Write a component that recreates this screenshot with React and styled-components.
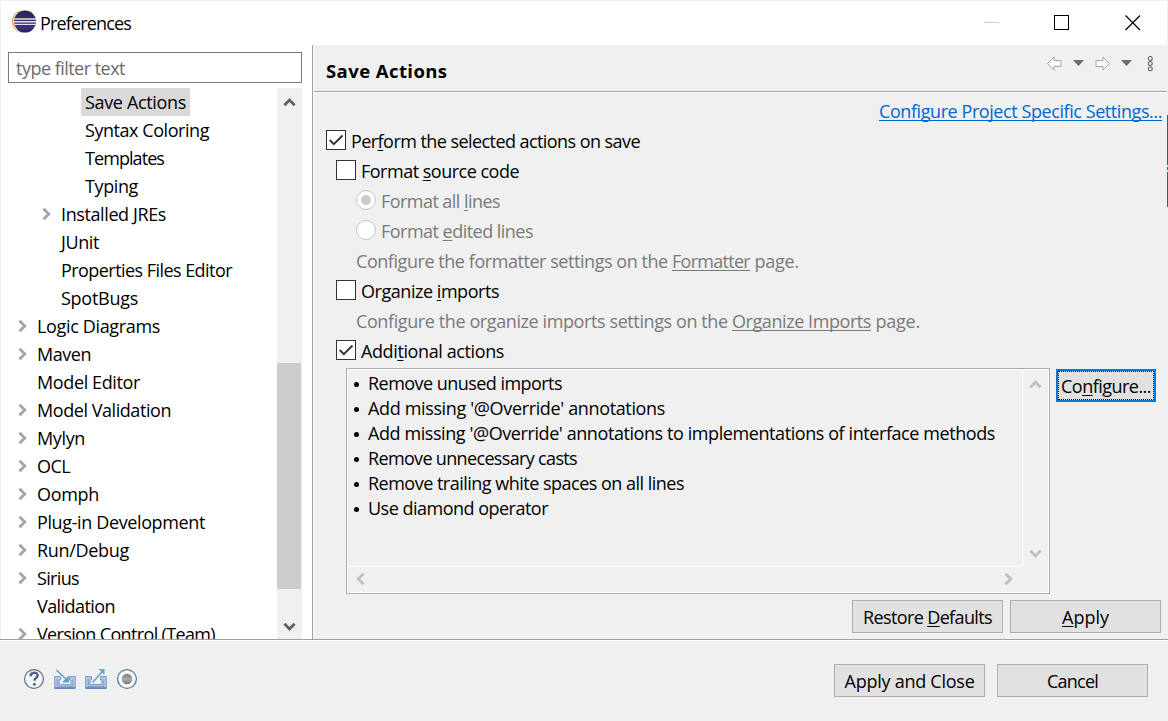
import React, { useLayoutEffect, useRef } from "react";
import styled, { createGlobalStyle } from "styled-components";

const Global = createGlobalStyle`
  * { box-sizing: border-box; }
  html, body { margin: 0; padding: 0; overflow: hidden; }
  body {
    font-family: "Open Sans", "Noto Sans", sans-serif;
    font-size: 18px;
    color: #000;
    background: #f0f0f0;
  }
`;

/* ---------- text ---------- */

const Text = styled.span`
  display: inline-block;
  flex: none;
  white-space: pre;
  color: ${(p) => p.$color || "inherit"};
  font-weight: ${(p) => (p.$bold ? 700 : 400)};
  font-size: ${(p) => (p.$bold ? "18.5px" : "18px")};
`;

const Mnemonic = styled.u`
  text-decoration: underline;
  text-decoration-thickness: 1px;
  text-underline-offset: 2px;
  text-decoration-skip-ink: none;
`;

/* A label whose tracking is computed so that it fills the given width.
   "&" marks the letter that follows it as the keyboard mnemonic. */
function Label({ w, text, color, bold, as: Inner }) {
  const ref = useRef(null);
  useLayoutEffect(() => {
    const el = ref.current;
    el.style.letterSpacing = "0px";
    const natural = el.getBoundingClientRect().width;
    el.style.letterSpacing = (w - natural) / el.textContent.length + "px";
  }, [w, text]);
  const i = text.indexOf("&");
  const body =
    i < 0 ? text : (
      <>
        {text.slice(0, i)}
        <Mnemonic>{text[i + 1]}</Mnemonic>
        {text.slice(i + 2)}
      </>
    );
  return (
    <Text ref={ref} $color={color} $bold={bold}>
      {Inner ? <Inner>{body}</Inner> : body}
    </Text>
  );
}

const Link = styled.a`
  text-decoration: underline;
  text-decoration-thickness: 1px;
  text-underline-offset: 2px;
  text-decoration-skip-ink: none;
`;

/* ---------- window ---------- */

const Window = styled.div`
  position: relative;
  width: 1168px;
  height: 721px;
  display: flex;
  flex-direction: column;
  background: #f0f0f0;
  padding: 1px 1px 0;
  overflow: hidden;
`;

const TitleBar = styled.header`
  flex: none;
  height: 44px;
  background: #fff;
  display: flex;
  align-items: flex-start;
  padding-left: 11px;
`;

const AppIcon = styled.svg`
  flex: none;
  width: 25px;
  height: 24px;
  margin-top: 9px;
`;

const TitleText = styled.div`
  line-height: 28px;
  margin: 8px 0 0 3px;
  flex: 1;
`;

const WindowButtons = styled.div`
  display: flex;
  gap: 54px;
  padding: 13px 25px 0 0;
  svg { display: block; width: 17px; height: 17px; }
`;

const Body = styled.main`
  flex: none;
  height: 594px;
  display: flex;
`;

/* ---------- left panel ---------- */

const Sidebar = styled.aside`
  flex: none;
  width: 313px;
  height: 594px;
  background: #fff;
  border-right: 1px solid #fff;
  box-shadow: inset -1px 0 0 #a0a0a0;
  padding: 7px 0 0 7px;
`;

const FilterBox = styled.div`
  width: 294px;
  height: 31px;
  border: 1px solid #7a7a7a;
  line-height: 31px;
  padding-left: 7px;
`;

const TreeArea = styled.div`
  width: 294px;
  height: 551px;
  margin-top: 5px;
  display: flex;
  overflow: hidden;
`;

const Tree = styled.ul`
  list-style: none;
  margin: 0;
  padding: 0;
  flex: 1;
  min-width: 0;
`;

const TreeItem = styled.li`
  height: 28px;
  line-height: 28px;
  display: flex;
  align-items: center;
  padding-left: ${(p) => 10 + p.$level * 24}px;
`;

const TreeArrow = styled.span`
  width: 15px;
  flex: none;
  display: flex;
`;

const TreeLabel = styled.span`
  display: flex;
  padding: 0 4px;
  background: ${(p) => (p.$selected ? "#d9d9d9" : "transparent")};
`;

const ScrollTrack = styled.div`
  flex: none;
  width: 25px;
  height: 551px;
  background: #f0f0f0;
  display: flex;
  flex-direction: column;
  align-items: center;
  padding: 9px 0 0;
`;

const ScrollThumb = styled.div`
  flex: none;
  width: 24px;
  height: 226px;
  margin: 255px 1px 32px 0;
  background: #cdcdcd;
`;

/* ---------- right panel ---------- */

const Page = styled.section`
  flex: 1;
  display: flex;
  flex-direction: column;
`;

const PageHeader = styled.div`
  flex: none;
  height: 48px;
  border-bottom: 1px solid #fff;
  box-shadow: inset 0 -1px 0 #a0a0a0;
  display: flex;
  justify-content: space-between;
  padding: 11px 13px 0 12px;
  line-height: 30px;
`;

const NavTools = styled.svg`
  width: 107px;
  height: 18px;
`;

const LinkRow = styled.div`
  display: flex;
  justify-content: flex-end;
  line-height: 30px;
  height: 33px;
  padding: 3px 5px 0 0;
`;

const OptionRow = styled.div`
  height: 30px;
  line-height: 30px;
  display: flex;
  padding-left: ${(p) => p.$indent}px;
  color: ${(p) => (p.$disabled ? "#7a7a7a" : "#000")};
`;

const CheckBox = styled.span`
  flex: none;
  width: 20px;
  height: 20px;
  margin: 4px 5px 0 0;
  border: 1px solid #333;
  background: #fff;
  svg { display: block; width: 18px; height: 18px; }
`;

const Radio = styled.span`
  flex: none;
  width: 20px;
  height: 20px;
  margin: 4px 5px 0 0;
  border: 1px solid #c6c6c6;
  border-radius: 50%;
  background: ${(p) =>
    p.$on ? "radial-gradient(circle, #ccc 4.7px, #fff 5.4px)" : "#fff"};
`;

const ActionsRow = styled.div`
  display: flex;
  align-items: flex-start;
  padding: 2px 0 0 32px;
`;

const ListBox = styled.div`
  width: 704px;
  height: 226px;
  border: 1px solid #acacac;
  box-shadow: inset 0 0 0 1px #fff;
  padding: 1px;
  display: grid;
  grid-template-columns: 675px 1fr;
  grid-template-rows: 197px 1fr;
`;

const ListContent = styled.ul`
  list-style: none;
  margin: 0;
  padding: 1px 0 0 5px;
  border-right: 1px solid #fff;
  border-bottom: 1px solid #fff;
`;

const ListItem = styled.li`
  height: 25px;
  line-height: 25px;
  display: flex;
  align-items: center;
  &::before {
    content: "";
    width: 5px;
    height: 5px;
    border-radius: 50%;
    background: #000;
    margin: 1px 9px 0 1px;
  }
`;

const MiniScroll = styled.div`
  display: flex;
  flex-direction: ${(p) => (p.$vertical ? "column" : "row")};
  align-items: center;
  justify-content: space-between;
  padding: ${(p) => (p.$vertical ? "9px 0 8px" : "0 8px 1px 7px")};
`;

const Button = styled.button`
  font: inherit;
  color: #000;
  width: ${(p) => p.$w || 151}px;
  height: 33px;
  padding: 1px 0 0;
  border: 1px solid #adadad;
  background: #e1e1e1;
  display: flex;
  align-items: center;
  justify-content: center;
  line-height: 30px;
`;

const FocusedButton = styled(Button)`
  margin: 1px 0 0 6px;
  padding: 0;
  border: 2px solid #0078d7;
  outline: 1px dotted #000;
  outline-offset: -3px;
`;

const PageButtons = styled.div`
  display: flex;
  justify-content: flex-end;
  gap: 7px;
  padding: 6px 6px 0 0;
`;

/* ---------- footer ---------- */

const Footer = styled.footer`
  flex: 1;
  margin: 0 -1px;
  border-top: 1px solid #a0a0a0;
  box-shadow: inset 0 1px 0 #fff;
  display: flex;
  justify-content: space-between;
  padding: 24px 20px 0 23px;
`;

const FooterIcons = styled.svg`
  width: 116px;
  height: 24px;
  margin-top: 3px;
`;

const FooterButtons = styled.div`
  display: flex;
  gap: 12px;
`;

/* window behind the dialog, showing at its right edge */
const EdgeStrip = styled.div`
  position: absolute;
  right: 0;
  top: 115px;
  width: 1px;
  height: 92px;
  background: linear-gradient(#0a66c2 0 50px, #f0f0f0 50px 52px, #0a66c2 52px 55px, #f0f0f0 55px 57px, #0a66c2 57px);
`;

/* ---------- drawings ---------- */

const chevrons = {
  up: "M1.4 8.2 L6.5 3.1 L11.6 8.2",
  down: "M1.4 2.8 L6.5 7.9 L11.6 2.8",
};

function Chevron({ dir, color = "#606060" }) {
  if (dir === "up" || dir === "down") {
    return (
      <svg width="13" height="11" viewBox="0 0 13 11">
        <path d={chevrons[dir]} fill="none" stroke={color} strokeWidth="2.8" />
      </svg>
    );
  }
  return (
    <svg width="11" height="14" viewBox="0 0 11 14">
      <path
        d={dir === "left" ? "M8.5 1.7 L3.2 7 L8.5 12.3" : "M1.5 1.7 L6.8 7 L1.5 12.3"}
        fill="none"
        stroke={color}
        strokeWidth="2.9"
      />
    </svg>
  );
}

function Check({ on }) {
  return (
    <CheckBox>
      {on && (
        <svg viewBox="0 0 18 18">
          <path d="M2.7 9 L6.8 13.1 L15.5 4.5" fill="none" stroke="#333" strokeWidth="1.9" />
        </svg>
      )}
    </CheckBox>
  );
}

function EclipseIcon() {
  return (
    <AppIcon viewBox="0 0 25 24">
      <circle cx="11.3" cy="11.6" r="11.3" fill="#f7941e" />
      <circle cx="12.7" cy="11.6" r="11.6" fill="#fff" />
      <defs>
        <linearGradient id="globe" x1="0" y1="0" x2="0" y2="1">
          <stop offset="0" stopColor="#2c2255" />
          <stop offset="0.75" stopColor="#3d3180" />
          <stop offset="1" stopColor="#2c2255" />
        </linearGradient>
        <clipPath id="disc"><circle cx="13" cy="11.6" r="11" /></clipPath>
      </defs>
      <circle cx="13" cy="11.6" r="11" fill="url(#globe)" />
      <g clipPath="url(#disc)">
        <path d="M2 9h22M2 11.8h22M2 14.4h22" stroke="#e4e2ee" strokeWidth="1.4" />
      </g>
    </AppIcon>
  );
}

function Tray({ x, out }) {
  return (
    <g transform={`translate(${x} 0)`}>
      <path
        d="M0.7 9.5H6.5V13H5V17.500H17V13H15.500V9.500H21.300V21.500H0.700z"
        fill="#b4c8e6"
        stroke="#7d9ccc"
      />
      <path d="M3.200 12V19.300H18.800V12" fill="none" stroke="#7d9ccc" />
      <path d="M0.500 21H21.500" stroke="#5f82bc" strokeWidth="1.600" />
      {out ? (
        <>
          <path d="M7.500 15.500L17 5" stroke="#6ea6c8" strokeWidth="1.700" />
          <path d="M13.500 2h6v6z" fill="#6ea6c8" />
        </>
      ) : (
        <>
          <path d="M2.500 3.200L13 13" stroke="#6ea6c8" strokeWidth="1.700" />
          <path d="M14.800 8.500V15.500H8z" fill="#5f9ec4" />
        </>
      )}
    </g>
  );
}

/* ---------- data ---------- */

const tree = [
  { text: "Save Actions", w: 101, level: 2, selected: true },
  { text: "Syntax Coloring", w: 124, level: 2 },
  { text: "Templates", w: 79, level: 2 },
  { text: "Typing", w: 53, level: 2 },
  { text: "Installed JREs", w: 105, level: 1, arrow: true },
  { text: "JUnit", w: 38, level: 1 },
  { text: "Properties Files Editor", w: 171, level: 1 },
  { text: "SpotBugs", w: 77, level: 1 },
  { text: "Logic Diagrams", w: 123, level: 0, arrow: true },
  { text: "Maven", w: 54, level: 0, arrow: true },
  { text: "Model Editor", w: 103, level: 0 },
  { text: "Model Validation", w: 134, level: 0, arrow: true },
  { text: "Mylyn", w: 48, level: 0, arrow: true },
  { text: "OCL", w: 33, level: 0, arrow: true },
  { text: "Oomph", w: 62, level: 0, arrow: true },
  { text: "Plug-in Development", w: 168, level: 0, arrow: true },
  { text: "Run/Debug", w: 92, level: 0, arrow: true },
  { text: "Sirius", w: 42, level: 0, arrow: true },
  { text: "Validation", w: 78, level: 0 },
  { text: "Version Control (Team)", w: 178, level: 0, arrow: true },
];

const actions = [
  ["Remove unused imports", 194],
  ["Add missing '@Override' annotations", 297],
  ["Add missing '@Override' annotations to implementations of interface methods", 627],
  ["Remove unnecessary casts", 209],
  ["Remove trailing white spaces on all lines", 316],
  ["Use diamond operator", 180],
];

export default function App() {
  return (
    <>
      <Global />
      <Window>
        <TitleBar>
          <EclipseIcon />
          <TitleText><Label text="Preferences" w={91} /></TitleText>
          <WindowButtons>
            <svg viewBox="0 0 17 17"><path d="M1 8.500h15" stroke="#ccc" /></svg>
            <svg viewBox="0 0 17 17"><rect x="0.500" y="1.500" width="14" height="14" fill="none" stroke="#000" /></svg>
            <svg viewBox="0 0 17 17"><path d="M0.500 1.500l14.500 14.500M15 1.500L0.500 16" stroke="#000" strokeWidth="1.200" /></svg>
          </WindowButtons>
        </TitleBar>

        <Body>
          <Sidebar>
            <FilterBox><Label text="type filter text" w={109} color="#6b6b6b" /></FilterBox>
            <TreeArea>
              <Tree>
                {tree.map((t) => (
                  <TreeItem key={t.text} $level={t.level}>
                    <TreeArrow>{t.arrow && <Chevron dir="right" color="#a6a6a6" />}</TreeArrow>
                    <TreeLabel $selected={t.selected}><Label text={t.text} w={t.w} /></TreeLabel>
                  </TreeItem>
                ))}
              </Tree>
              <ScrollTrack>
                <Chevron dir="up" />
                <ScrollThumb />
                <Chevron dir="down" />
              </ScrollTrack>
            </TreeArea>
          </Sidebar>

          <Page>
            <PageHeader>
              <Label text="Save Actions" w={121.5} bold />
              <NavTools viewBox="0 0 107 18">
                <path d="M0.500 7.500L7 1V4.500H14V10.500H7V14z" fill="#f8f8f8" stroke="#a8a8a8" />
                <path d="M62.500 7.500L56 1V4.500H49V10.500H56V14z" fill="#f8f8f8" stroke="#a8a8a8" />
                <path d="M26 4h11l-5.500 6zM74 4h11l-5.500 6z" fill="#6d6d6d" />
                <g fill="#fff" stroke="#6d6d6d" strokeWidth="1.200">
                  <circle cx="103.300" cy="2.400" r="1.900" />
                  <circle cx="103.300" cy="7.600" r="1.900" />
                  <circle cx="103.300" cy="12.800" r="1.900" />
                </g>
              </NavTools>
            </PageHeader>

            <LinkRow>
              <Label text="Configure Project Specific Settings..." w={283} color="#0066cc" as={Link} />
            </LinkRow>

            <OptionRow $indent={12}><Check on /><Label text="Per&form the selected actions on save" w={289} /></OptionRow>
            <OptionRow $indent={22}><Check /><Label text="Format &source code" w={158} /></OptionRow>
            <OptionRow $indent={42} $disabled><Radio $on /><Label text="Format all &lines" w={119} /></OptionRow>
            <OptionRow $indent={42} $disabled><Radio /><Label text="Format &edited lines" w={152} /></OptionRow>
            <OptionRow $indent={42} $disabled>
              <Label text="Configure the formatter settings on the " w={316} />
              <Label text="Formatter" w={78} as={Link} />
              <Label text=" page." w={49} />
            </OptionRow>
            <OptionRow $indent={22}><Check /><Label text="Organize &imports" w={138} /></OptionRow>
            <OptionRow $indent={42} $disabled>
              <Label text="Configure the organize imports settings on the " w={376} />
              <Label text="Organize Imports" w={139} as={Link} />
              <Label text=" page." w={49} />
            </OptionRow>
            <OptionRow $indent={22}><Check on /><Label text="Addi&tional actions" w={143} /></OptionRow>

            <ActionsRow>
              <ListBox>
                <ListContent>
                  {actions.map(([text, w]) => (
                    <ListItem key={text}><Label text={text} w={w} /></ListItem>
                  ))}
                </ListContent>
                <MiniScroll $vertical>
                  <Chevron dir="up" color="#c0c0c0" />
                  <Chevron dir="down" color="#c0c0c0" />
                </MiniScroll>
                <MiniScroll>
                  <Chevron dir="left" color="#c0c0c0" />
                  <Chevron dir="right" color="#c0c0c0" />
                </MiniScroll>
              </ListBox>
              <FocusedButton $w={100}><Label text="Co&nfigure..." w={90} /></FocusedButton>
            </ActionsRow>

            <PageButtons>
              <Button><Label text="Restore &Defaults" w={129} /></Button>
              <Button><Label text="&Apply" w={47} /></Button>
            </PageButtons>
          </Page>
        </Body>

        <Footer>
          <FooterIcons viewBox="0 0 116 24">
            <defs>
              <linearGradient id="ball" x1="0" y1="0" x2="0" y2="1">
                <stop offset="0" stopColor="#777" />
                <stop offset="0.500" stopColor="#aaa" />
                <stop offset="1" stopColor="#777" />
              </linearGradient>
            </defs>
            <circle cx="11" cy="12" r="9.400" fill="#f6f7fa" stroke="#5d6a8c" strokeWidth="1.200" />
            <path d="M7.600 9.300c0-4.800 7-4.600 7-0.800c0 2.600-3.200 2.500-3.200 5.300" fill="none" stroke="#55648c" strokeWidth="2.500" />
            <circle cx="11.400" cy="17.300" r="1.500" fill="#55648c" />
            <Tray x={31} />
            <Tray x={62} out />
            <circle cx="104" cy="12" r="9.400" fill="#fbfcfd" stroke="#4a7fae" strokeWidth="1.300" />
            <circle cx="104" cy="12" r="5.300" fill="url(#ball)" />
          </FooterIcons>
          <FooterButtons>
            <Button><Label text="Apply and Close" w={130} /></Button>
            <Button><Label text="Cancel" w={51} /></Button>
          </FooterButtons>
        </Footer>
        <EdgeStrip />
      </Window>
    </>
  );
}
